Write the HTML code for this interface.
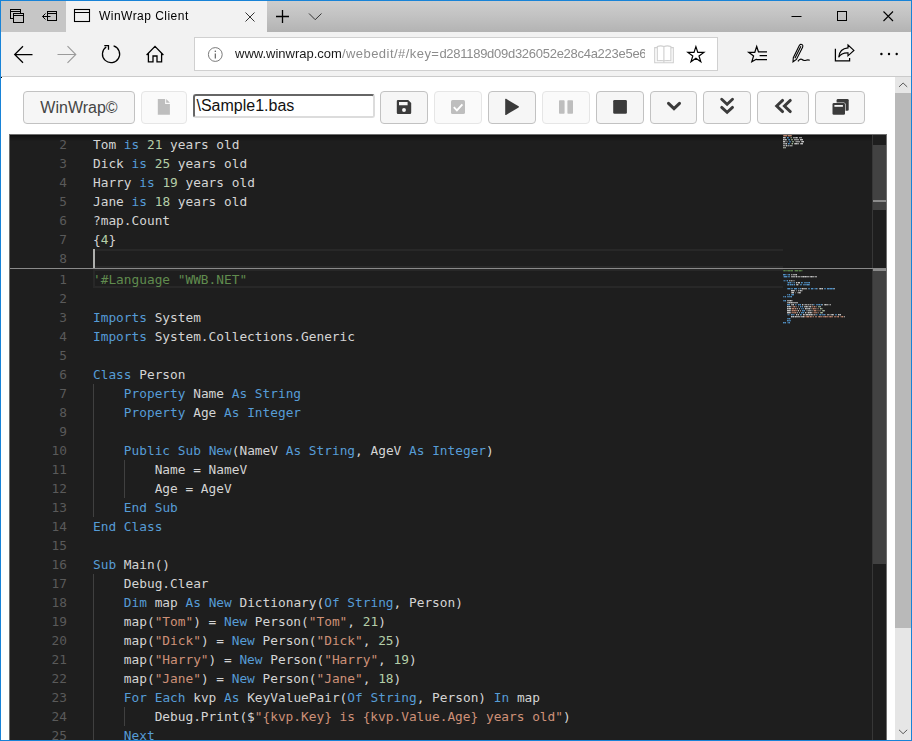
<!DOCTYPE html>
<html lang="en">
<head>
<meta charset="utf-8">
<title>WinWrap Client</title>
<style>
*{box-sizing:border-box;margin:0;padding:0}
html,body{width:912px;height:741px;overflow:hidden;background:#fff}
body{font-family:"Liberation Sans",sans-serif;position:relative}
.abs{position:absolute}
#frame{position:absolute;left:0;top:0;width:912px;height:741px;border:1px solid #1883d7;z-index:50;pointer-events:none}
/* ---------- browser chrome ---------- */
#tabbar{position:absolute;left:1px;top:1px;width:910px;height:31px;background:linear-gradient(#cdcdcd,#c3c3c3 45%,#b3b3b3)}
#tabprev{position:absolute;left:0;top:0;width:65px;height:31px;background:#c6c6c6}
#tab{position:absolute;left:65px;top:0;width:201px;height:31px;background:#f2f2f2}
#tabtitle{position:absolute;left:98px;top:8px;font-size:12px;letter-spacing:.47px;color:#000;white-space:nowrap;will-change:transform}
#navbar{position:absolute;left:1px;top:32px;width:910px;height:44px;background:#f2f2f2}
#navline{position:absolute;left:1px;top:76px;width:910px;height:1px;background:#cbcbcb}
#addr{position:absolute;left:193px;top:5px;width:524px;height:34px;background:#fff;border:1px solid #d0d0d0}
#url{position:absolute;left:39.5px;top:8px;font-size:13px;white-space:nowrap;color:#8c8c8c;width:410px;overflow:hidden;will-change:transform}
#url b{font-weight:normal;color:#1a1a1a}
#u1{letter-spacing:.45px}#u2,#u3{letter-spacing:-.276px}
svg{position:absolute;overflow:visible}
/* ---------- page ---------- */
#page{position:absolute;left:1px;top:77px;width:894px;height:663px;background:#fff;overflow:hidden}
.btn{position:absolute;top:14px;height:33px;border:1px solid #c2c2c2;border-radius:4px;background:#f6f6f6}
.btn.dis{border-color:#e6e6e6;background:#fafafa}
#brand{font-size:16px;color:#454545;text-align:center;line-height:31px}
#fname{position:absolute;left:192px;top:17px;width:182px;height:24px;border:2px solid;border-color:#666 #dcdcdc #dcdcdc #666;border-radius:3px;background:#fff;font-size:16px;line-height:19px;color:#111;padding-left:1.5px;white-space:nowrap}
/* ---------- scrollbar ---------- */
#vsb{position:absolute;left:895px;top:77px;width:16px;height:663px;background:#e6e6e6}
#vthumb{position:absolute;left:0;top:16px;width:16px;height:535px;background:#b9b9b9}
/* ---------- editor ---------- */
#ed{position:absolute;left:8px;top:57px;width:878px;height:620px;background:#1e1e1e;border:1px solid #6f6f6f;border-bottom:0;overflow:hidden;
 font-family:"DejaVu Sans Mono","Liberation Mono",monospace;font-size:12.8px;color:#d4d4d4}
.ln{position:absolute;left:0;height:19px;line-height:19px;white-space:pre}
.ln i{position:absolute;left:0;width:57px;text-align:right;color:#5a5a5a;font-style:normal}
.ln span.c{position:absolute;left:83px}
.cl{position:absolute;left:83px;width:690px;height:19px;border:2px solid #282828;border-right:0}
.ig{position:absolute;width:1px;background:#404040}
.k{color:#569cd6}.n{color:#b5cea8}.s{color:#ce9178}.g{color:#608b4e}
</style>
</head>
<body>
<div id="tabbar">
  <div id="tabprev"></div>
  <div id="tab"></div>
  <div id="tabtitle">WinWrap Client</div>
</div>
<div id="navbar">
  <div id="addr"><div id="url"><b>www.winwrap.com</b><span id="u1">/webedit/#/key=</span><span id="u2">d281189d09d326052e28c4a223e5e</span><span id="u3">66</span></div></div>
</div>
<div id="navline"></div>
<svg id="chromeicons" width="912" height="77" viewBox="0 0 912 77" style="left:0;top:0;z-index:5" fill="none" stroke="#000" stroke-width="1">
  <!-- tab preview icons -->
  <g>
    <rect x="10.5" y="9.5" width="10" height="9"/><line x1="10.5" y1="11.5" x2="20.5" y2="11.5"/>
    <rect x="13.5" y="13.5" width="10" height="9" fill="#c6c6c6"/><line x1="13.5" y1="15.5" x2="23.5" y2="15.5"/>
    <rect x="47.5" y="11.5" width="9" height="9"/><line x1="47.5" y1="13.5" x2="56.5" y2="13.5"/>
    <path d="M50.5 16.5H42.5M45.5 13.5L42.5 16.5L45.5 19.5"/>
  </g>
  <!-- active tab icon, close, plus, chevron -->
  <rect x="74.5" y="9.5" width="15" height="12" stroke-width="1.1"/><line x1="74.5" y1="12.5" x2="89.5" y2="12.5"/>
  <path d="M245.5 12.5L254.5 21.5M254.5 12.5L245.5 21.5" stroke="#333"/>
  <path d="M276 16.5H289M282.5 10V23" stroke-width="1.3"/>
  <path d="M309 13.5L315.2 19.7L321.5 13.5" stroke="#333"/>
  <!-- window controls -->
  <path d="M791.5 16.5H801.5"/>
  <rect x="837.5" y="11.5" width="9" height="9"/>
  <path d="M883.5 11.5L893 21M893 11.5L883.5 21" stroke-width="1.1"/>
  <!-- nav -->
  <path d="M32.5 54.5H14.8M23 46.2L14.7 54.5L23 62.8" stroke-width="1.25"/>
  <path d="M57.5 54.5H75.8M67.5 46.2L75.8 54.5L67.5 62.8" stroke="#9b9b9b" stroke-width="1.1"/>
  <path d="M113.6 45.9A8.6 8.6 0 1 1 106.2 47.0M104.3 45.5H108.5V49.7" stroke-width="1.25"/>
  <path d="M146.6 55.0L155 46.4L163.4 55.0M148.4 53.6V61.9H153V56H157V61.9H161.6V53.6" stroke-width="1.3"/>
  <!-- info -->
  <circle cx="215.3" cy="54.5" r="6.9" stroke="#6b6b6b" stroke-width="0.9"/>
  <path d="M215.3 53.4V58.4" stroke="#555" stroke-width="1.1"/><circle cx="215.3" cy="51.2" r="0.75" fill="#555" stroke="none"/>
  <!-- reading view (disabled) -->
  <g stroke="#cfcfcf" stroke-width="1.1">
    <path d="M657.3 47.6H654.7V62.7H673.3V47.6H670.9"/>
    <path d="M657.3 60.8V46.6Q660.8 45.2 663.9 46.6V60.8Q660.8 60.4 657.3 60.8ZM663.9 46.6Q667.2 45.2 670.9 46.6V60.8Q667.2 60.4 663.9 60.8M663.9 60.8V62.7"/>
  </g>
  <!-- favourite star -->
  <polygon points="695.9,46.6 697.8,52.4 703.9,52.4 699.0,56.0 700.8,61.8 695.9,58.2 691.0,61.8 692.8,56.0 687.9,52.4 694.0,52.4" stroke-width="1.2"/>
  <!-- hub -->
  <path d="M758.6 52.3L756.7 46.5L754.8 52.3L748.7 52.3L753.6 55.9L751.8 61.7L756.7 59.0M758.3 51.8H767M759.6 55.7H767M756.4 59.6H767" stroke-width="1.2"/>
  <!-- pen -->
  <path d="M793 61.8L793.3 57.7L799.3 45.5Q800.6 43.6 802.2 44.7Q803.4 45.7 802.6 47.3L796.4 59.4ZM794.9 58.3L800.9 46.2M797.9 61.4Q799.8 58.4 801.6 59.3Q803.8 61 806 60.2Q808 59.5 809.8 60.2" stroke-width="1.1"/>
  <!-- share -->
  <path d="M835.4 48.8V60.9H849.6V58" stroke-width="1.25"/>
  <path d="M848 45L853.9 50.4L848 55.8V52.9Q841.5 52.6 838.7 57.2Q839.6 48.6 848 47.9Z" stroke-width="1.15"/>
  <!-- more -->
  <g fill="#000" stroke="none"><circle cx="881.4" cy="54" r="1.2"/><circle cx="889" cy="54" r="1.2"/><circle cx="896.7" cy="54" r="1.2"/></g>
</svg>


<div id="page">
  <div class="btn" id="brand" style="left:22px;width:112px">WinWrap©</div>
  <div class="btn dis" style="left:140px;width:46px"></div>
  <div id="fname">\Sample1.bas</div>
  <div class="btn" style="left:379px;width:48px"></div>
  <div class="btn dis" style="left:433px;width:48px"></div>
  <div class="btn" style="left:487px;width:48px"></div>
  <div class="btn dis" style="left:541px;width:48px"></div>
  <div class="btn" style="left:595px;width:48px"></div>
  <div class="btn" style="left:649px;width:47px"></div>
  <div class="btn" style="left:702px;width:48px"></div>
  <div class="btn" style="left:756px;width:52px"></div>
  <div class="btn" style="left:814px;width:50px"></div>

  <div id="ed">
<!--DECO-->
<div class="abs" style="left:0;top:0;width:862px;height:6px;box-shadow:#000 0 6px 6px -6px inset"></div>
<div class="cl" style="top:114px"></div>
<div class="cl" style="top:134px"></div>
<div class="abs" style="left:83px;top:114px;width:2px;height:19px;background:#aeafad"></div>
<div class="abs" style="left:0;top:133px;width:876px;height:1px;background:#8a8a8a;z-index:3"></div>
<div class="ig" style="left:83px;top:249px;height:133px"></div>
<div class="ig" style="left:114px;top:325px;height:38px"></div>
<div class="ig" style="left:83px;top:439px;height:190px"></div>
<div class="ig" style="left:114px;top:572px;height:19px"></div>
<div class="abs" style="left:862px;top:0;width:1px;height:620px;background:#373737"></div>
<div class="abs" style="left:863px;top:10px;width:13px;height:65px;background:#424242"></div>
<div class="abs" style="left:863px;top:65px;width:13px;height:2px;background:#8c8c8c"></div>
<div class="abs" style="left:863px;top:134px;width:13px;height:295px;background:#424242"></div>
<div class="abs" style="left:863px;top:134px;width:13px;height:2px;background:#8c8c8c"></div>
<svg width="90" height="200" viewBox="773 0 90 200" style="left:773px;top:0" fill="none" stroke-width="1" shape-rendering="crispEdges">
<path stroke="#608b4e" opacity="0.35" d="M784 135.5h1M788 135.5h1M792 135.5h1"/>
<path stroke="#608b4e" opacity="0.12" d="M784 136.5h1M788 136.5h1M792 136.5h1"/>
<path stroke="#608b4e" opacity="0.65" d="M773 135.5h1M775 135.5h1M776 135.5h1M777 135.5h1M780 135.5h1M791 135.5h1"/>
<path stroke="#608b4e" opacity="0.24" d="M773 136.5h1M775 136.5h1M776 136.5h1M777 136.5h1M780 136.5h1M791 136.5h1"/>
<path stroke="#608b4e" opacity="0.90" d="M774 135.5h1M778 135.5h1M779 135.5h1M781 135.5h1M782 135.5h1M785 135.5h1M786 135.5h1M787 135.5h1M789 135.5h1M790 135.5h1"/>
<path stroke="#608b4e" opacity="0.36" d="M774 136.5h1M778 136.5h1M779 136.5h1M781 136.5h1M782 136.5h1M785 136.5h1M786 136.5h1M787 136.5h1M789 136.5h1M790 136.5h1"/>
<path stroke="#569cd6" opacity="0.35" d="M776 139.5h1M777 139.5h1M773 141.5h1M777 141.5h1M773 145.5h1M775 145.5h1M776 145.5h1M777 147.5h1M781 147.5h1M782 147.5h1M783 147.5h1M779 149.5h1M783 149.5h1M780 153.5h1M789 153.5h1M803 153.5h1M804 153.5h1M778 159.5h1M774 161.5h1M786 169.5h1M804 169.5h1M810 169.5h1M791 171.5h1M792 173.5h1M777 179.5h1M779 179.5h1M784 179.5h1M807 179.5h1M811 179.5h1M780 183.5h1M777 187.5h1"/>
<path stroke="#569cd6" opacity="0.12" d="M776 140.5h1M777 140.5h1M773 142.5h1M777 142.5h1M773 146.5h1M775 146.5h1M776 146.5h1M777 148.5h1M781 148.5h1M782 148.5h1M783 148.5h1M779 150.5h1M783 150.5h1M780 154.5h1M789 154.5h1M803 154.5h1M804 154.5h1M778 160.5h1M774 162.5h1M786 170.5h1M804 170.5h1M810 170.5h1M791 172.5h1M792 174.5h1M777 180.5h1M779 180.5h1M784 180.5h1M807 180.5h1M811 180.5h1M780 184.5h1M777 188.5h1"/>
<path stroke="#569cd6" opacity="0.65" d="M778 2.5h1M778 4.5h1M779 6.5h1M780 6.5h1M779 8.5h1M775 139.5h1M778 139.5h1M778 141.5h1M779 141.5h1M774 145.5h1M779 147.5h1M784 147.5h1M792 147.5h1M794 147.5h1M795 147.5h1M796 147.5h1M797 147.5h1M798 147.5h1M777 149.5h1M781 149.5h1M790 149.5h1M791 149.5h1M793 149.5h1M794 149.5h1M795 149.5h1M796 149.5h1M799 149.5h1M777 153.5h1M781 153.5h1M782 153.5h1M788 153.5h1M798 153.5h1M799 153.5h1M805 153.5h1M814 153.5h1M815 153.5h1M819 153.5h1M822 153.5h1M777 159.5h1M781 159.5h1M773 161.5h1M777 161.5h1M778 161.5h1M779 161.5h1M780 161.5h1M773 165.5h1M774 165.5h1M785 169.5h1M789 169.5h1M803 169.5h1M806 169.5h1M807 169.5h1M808 169.5h1M791 173.5h1M793 173.5h1M793 175.5h1M792 177.5h1M778 179.5h1M782 179.5h1M783 179.5h1M791 179.5h1M806 179.5h1M809 179.5h1M812 179.5h1M813 179.5h1M825 179.5h1M826 179.5h1M777 183.5h1M778 183.5h1M778 185.5h1M779 185.5h1M780 185.5h1M774 187.5h1M778 187.5h1"/>
<path stroke="#569cd6" opacity="0.24" d="M778 3.5h1M778 5.5h1M779 7.5h1M780 7.5h1M779 9.5h1M775 140.5h1M778 140.5h1M778 142.5h1M779 142.5h1M774 146.5h1M779 148.5h1M784 148.5h1M792 148.5h1M794 148.5h1M795 148.5h1M796 148.5h1M797 148.5h1M798 148.5h1M777 150.5h1M781 150.5h1M790 150.5h1M791 150.5h1M793 150.5h1M794 150.5h1M795 150.5h1M796 150.5h1M799 150.5h1M777 154.5h1M781 154.5h1M782 154.5h1M788 154.5h1M798 154.5h1M799 154.5h1M805 154.5h1M814 154.5h1M815 154.5h1M819 154.5h1M822 154.5h1M777 160.5h1M781 160.5h1M773 162.5h1M777 162.5h1M778 162.5h1M779 162.5h1M780 162.5h1M773 166.5h1M774 166.5h1M785 170.5h1M789 170.5h1M803 170.5h1M806 170.5h1M807 170.5h1M808 170.5h1M791 174.5h1M793 174.5h1M793 176.5h1M792 178.5h1M778 180.5h1M782 180.5h1M783 180.5h1M791 180.5h1M806 180.5h1M809 180.5h1M812 180.5h1M813 180.5h1M825 180.5h1M826 180.5h1M777 184.5h1M778 184.5h1M778 186.5h1M779 186.5h1M780 186.5h1M774 188.5h1M778 188.5h1"/>
<path stroke="#569cd6" opacity="0.90" d="M777 2.5h1M779 4.5h1M778 8.5h1M773 139.5h1M774 139.5h1M779 139.5h1M774 141.5h1M775 141.5h1M776 141.5h1M777 145.5h1M778 147.5h1M780 147.5h1M791 147.5h1M799 147.5h1M778 149.5h1M780 149.5h1M782 149.5h1M784 149.5h1M797 149.5h1M798 149.5h1M778 153.5h1M779 153.5h1M784 153.5h1M785 153.5h1M786 153.5h1M790 153.5h1M801 153.5h1M802 153.5h1M806 153.5h1M817 153.5h1M818 153.5h1M820 153.5h1M821 153.5h1M823 153.5h1M779 159.5h1M782 159.5h1M783 159.5h1M775 161.5h1M781 161.5h1M775 165.5h1M777 169.5h1M778 169.5h1M779 169.5h1M788 169.5h1M790 169.5h1M809 169.5h1M811 169.5h1M790 171.5h1M792 171.5h1M792 175.5h1M794 175.5h1M791 177.5h1M793 177.5h1M781 179.5h1M790 179.5h1M810 179.5h1M814 179.5h1M779 183.5h1M777 185.5h1M773 187.5h1M775 187.5h1M779 187.5h1"/>
<path stroke="#569cd6" opacity="0.36" d="M777 3.5h1M779 5.5h1M778 9.5h1M773 140.5h1M774 140.5h1M779 140.5h1M774 142.5h1M775 142.5h1M776 142.5h1M777 146.5h1M778 148.5h1M780 148.5h1M791 148.5h1M799 148.5h1M778 150.5h1M780 150.5h1M782 150.5h1M784 150.5h1M797 150.5h1M798 150.5h1M778 154.5h1M779 154.5h1M784 154.5h1M785 154.5h1M786 154.5h1M790 154.5h1M801 154.5h1M802 154.5h1M806 154.5h1M817 154.5h1M818 154.5h1M820 154.5h1M821 154.5h1M823 154.5h1M779 160.5h1M782 160.5h1M783 160.5h1M775 162.5h1M781 162.5h1M775 166.5h1M777 170.5h1M778 170.5h1M779 170.5h1M788 170.5h1M790 170.5h1M809 170.5h1M811 170.5h1M790 172.5h1M792 172.5h1M792 176.5h1M794 176.5h1M791 178.5h1M793 178.5h1M781 180.5h1M790 180.5h1M810 180.5h1M814 180.5h1M779 184.5h1M777 186.5h1M773 188.5h1M775 188.5h1M779 188.5h1"/>
<path stroke="#b5cea8" opacity="0.35" d="M780 2.5h1M781 8.5h1"/>
<path stroke="#b5cea8" opacity="0.12" d="M780 3.5h1M781 9.5h1"/>
<path stroke="#b5cea8" opacity="0.65" d="M781 2.5h1M781 4.5h1M782 4.5h1M782 6.5h1M783 6.5h1M774 12.5h1M808 171.5h1M809 171.5h1M811 173.5h1M812 175.5h1M810 177.5h1"/>
<path stroke="#b5cea8" opacity="0.24" d="M781 3.5h1M781 5.5h1M782 5.5h1M782 7.5h1M783 7.5h1M774 13.5h1M808 172.5h1M809 172.5h1M811 174.5h1M812 176.5h1M810 178.5h1"/>
<path stroke="#b5cea8" opacity="0.90" d="M782 8.5h1M810 173.5h1M813 175.5h1M811 177.5h1"/>
<path stroke="#b5cea8" opacity="0.36" d="M782 9.5h1M810 174.5h1M813 176.5h1M811 178.5h1"/>
<path stroke="#ce9178" opacity="0.35" d="M777 0.5h1M781 171.5h1M782 171.5h1M785 171.5h1M801 171.5h1M803 171.5h1M805 171.5h1M781 173.5h1M784 173.5h1M786 173.5h1M802 173.5h1M806 173.5h1M807 173.5h1M781 175.5h1M787 175.5h1M803 175.5h1M806 175.5h1M807 175.5h1M808 175.5h1M809 175.5h1M781 177.5h1M786 177.5h1M802 177.5h1M803 177.5h1M807 177.5h1M795 181.5h1M799 181.5h1M802 181.5h1M812 181.5h1M818 181.5h1M826 181.5h1M830 181.5h1M833 181.5h1"/>
<path stroke="#ce9178" opacity="0.12" d="M777 1.5h1M781 172.5h1M782 172.5h1M785 172.5h1M801 172.5h1M803 172.5h1M805 172.5h1M781 174.5h1M784 174.5h1M786 174.5h1M802 174.5h1M806 174.5h1M807 174.5h1M781 176.5h1M787 176.5h1M803 176.5h1M806 176.5h1M807 176.5h1M808 176.5h1M809 176.5h1M781 178.5h1M786 178.5h1M802 178.5h1M803 178.5h1M807 178.5h1M795 182.5h1M799 182.5h1M802 182.5h1M812 182.5h1M818 182.5h1M826 182.5h1M830 182.5h1M833 182.5h1"/>
<path stroke="#ce9178" opacity="0.65" d="M773 0.5h1M781 0.5h1M783 171.5h1M802 171.5h1M804 173.5h1M805 173.5h1M783 175.5h1M785 175.5h1M786 175.5h1M782 177.5h1M783 177.5h1M784 177.5h1M804 177.5h1M805 177.5h1M806 177.5h1M794 181.5h1M796 181.5h1M801 181.5h1M803 181.5h1M805 181.5h1M806 181.5h1M808 181.5h1M810 181.5h1M811 181.5h1M813 181.5h1M814 181.5h1M816 181.5h1M817 181.5h1M819 181.5h1M821 181.5h1M822 181.5h1M824 181.5h1M825 181.5h1M827 181.5h1M831 181.5h1"/>
<path stroke="#ce9178" opacity="0.24" d="M773 1.5h1M781 1.5h1M783 172.5h1M802 172.5h1M804 174.5h1M805 174.5h1M783 176.5h1M785 176.5h1M786 176.5h1M782 178.5h1M783 178.5h1M784 178.5h1M804 178.5h1M805 178.5h1M806 178.5h1M794 182.5h1M796 182.5h1M801 182.5h1M803 182.5h1M805 182.5h1M806 182.5h1M808 182.5h1M810 182.5h1M811 182.5h1M813 182.5h1M814 182.5h1M816 182.5h1M817 182.5h1M819 182.5h1M821 182.5h1M822 182.5h1M824 182.5h1M825 182.5h1M827 182.5h1M831 182.5h1"/>
<path stroke="#ce9178" opacity="0.90" d="M774 0.5h1M775 0.5h1M776 0.5h1M778 0.5h1M779 0.5h1M780 0.5h1M784 171.5h1M804 171.5h1M782 173.5h1M783 173.5h1M785 173.5h1M803 173.5h1M782 175.5h1M784 175.5h1M804 175.5h1M805 175.5h1M785 177.5h1M797 181.5h1M798 181.5h1M800 181.5h1M809 181.5h1M815 181.5h1M820 181.5h1M828 181.5h1M832 181.5h1"/>
<path stroke="#ce9178" opacity="0.36" d="M774 1.5h1M775 1.5h1M776 1.5h1M778 1.5h1M779 1.5h1M780 1.5h1M784 172.5h1M804 172.5h1M782 174.5h1M783 174.5h1M785 174.5h1M803 174.5h1M782 176.5h1M784 176.5h1M804 176.5h1M805 176.5h1M785 178.5h1M797 182.5h1M798 182.5h1M800 182.5h1M809 182.5h1M815 182.5h1M820 182.5h1M828 182.5h1M832 182.5h1"/>
<path stroke="#d4d4d4" opacity="0.35" d="M775 6.5h1M776 6.5h1M777 6.5h1M785 6.5h1M775 10.5h1M777 10.5h1M779 10.5h1M782 10.5h1M782 139.5h1M785 141.5h1M787 141.5h1M790 141.5h1M799 141.5h1M804 141.5h1M780 145.5h1M782 145.5h1M783 145.5h1M784 145.5h1M787 147.5h1M788 149.5h1M791 153.5h1M807 153.5h1M786 155.5h1M789 155.5h1M792 155.5h1M785 157.5h1M787 157.5h1M782 165.5h1M793 169.5h1M794 169.5h1M797 169.5h1M799 169.5h1M801 169.5h1M818 169.5h1M819 169.5h1M786 171.5h1M788 171.5h1M798 171.5h1M806 171.5h1M800 173.5h1M801 173.5h1M808 173.5h1M812 173.5h1M796 175.5h1M797 175.5h1M801 175.5h1M802 175.5h1M810 175.5h1M796 177.5h1M797 177.5h1M808 177.5h1M787 179.5h1M795 179.5h1M803 179.5h1M805 179.5h1M815 179.5h1M819 179.5h1M820 179.5h1M784 181.5h1M790 181.5h1"/>
<path stroke="#d4d4d4" opacity="0.12" d="M775 7.5h1M776 7.5h1M777 7.5h1M785 7.5h1M775 11.5h1M777 11.5h1M779 11.5h1M782 11.5h1M782 140.5h1M785 142.5h1M787 142.5h1M790 142.5h1M799 142.5h1M804 142.5h1M780 146.5h1M782 146.5h1M783 146.5h1M784 146.5h1M787 148.5h1M788 150.5h1M791 154.5h1M807 154.5h1M786 156.5h1M789 156.5h1M792 156.5h1M785 158.5h1M787 158.5h1M782 166.5h1M793 170.5h1M794 170.5h1M797 170.5h1M799 170.5h1M801 170.5h1M818 170.5h1M819 170.5h1M786 172.5h1M788 172.5h1M798 172.5h1M806 172.5h1M800 174.5h1M801 174.5h1M808 174.5h1M812 174.5h1M796 176.5h1M797 176.5h1M801 176.5h1M802 176.5h1M810 176.5h1M796 178.5h1M797 178.5h1M808 178.5h1M787 180.5h1M795 180.5h1M803 180.5h1M805 180.5h1M815 180.5h1M819 180.5h1M820 180.5h1M784 182.5h1M790 182.5h1"/>
<path stroke="#d4d4d4" opacity="0.65" d="M775 2.5h1M783 2.5h1M784 2.5h1M785 2.5h1M787 2.5h1M789 2.5h1M790 2.5h1M791 2.5h1M774 4.5h1M776 4.5h1M784 4.5h1M785 4.5h1M786 4.5h1M787 4.5h1M788 4.5h1M786 6.5h1M787 6.5h1M788 6.5h1M789 6.5h1M791 6.5h1M773 8.5h1M774 8.5h1M775 8.5h1M784 8.5h1M787 8.5h1M788 8.5h1M790 8.5h1M773 10.5h1M774 10.5h1M778 10.5h1M780 10.5h1M781 10.5h1M773 12.5h1M775 12.5h1M781 139.5h1M783 139.5h1M784 139.5h1M785 139.5h1M781 141.5h1M782 141.5h1M783 141.5h1M784 141.5h1M788 141.5h1M789 141.5h1M791 141.5h1M792 141.5h1M794 141.5h1M796 141.5h1M797 141.5h1M798 141.5h1M800 141.5h1M802 141.5h1M803 141.5h1M805 141.5h1M806 141.5h1M779 145.5h1M781 145.5h1M786 149.5h1M793 153.5h1M794 153.5h1M795 153.5h1M796 153.5h1M809 153.5h1M811 153.5h1M824 153.5h1M784 155.5h1M788 155.5h1M791 155.5h1M781 157.5h1M788 157.5h1M790 157.5h1M777 165.5h1M778 165.5h1M779 165.5h1M781 165.5h1M777 167.5h1M778 167.5h1M780 167.5h1M782 167.5h1M783 167.5h1M784 167.5h1M785 167.5h1M786 167.5h1M787 167.5h1M781 169.5h1M782 169.5h1M795 169.5h1M796 169.5h1M798 169.5h1M800 169.5h1M802 169.5h1M812 169.5h1M814 169.5h1M816 169.5h1M817 169.5h1M820 169.5h1M778 171.5h1M780 171.5h1M794 171.5h1M795 171.5h1M797 171.5h1M799 171.5h1M810 171.5h1M778 173.5h1M787 173.5h1M789 173.5h1M796 173.5h1M797 173.5h1M798 173.5h1M780 175.5h1M790 175.5h1M798 175.5h1M799 175.5h1M800 175.5h1M814 175.5h1M780 177.5h1M787 177.5h1M789 177.5h1M799 177.5h1M801 177.5h1M812 177.5h1M794 179.5h1M798 179.5h1M800 179.5h1M802 179.5h1M804 179.5h1M817 179.5h1M818 179.5h1M821 179.5h1M823 179.5h1M829 179.5h1M782 181.5h1M786 181.5h1M787 181.5h1M788 181.5h1M789 181.5h1M791 181.5h1M792 181.5h1M834 181.5h1"/>
<path stroke="#d4d4d4" opacity="0.24" d="M775 3.5h1M783 3.5h1M784 3.5h1M785 3.5h1M787 3.5h1M789 3.5h1M790 3.5h1M791 3.5h1M774 5.5h1M776 5.5h1M784 5.5h1M785 5.5h1M786 5.5h1M787 5.5h1M788 5.5h1M786 7.5h1M787 7.5h1M788 7.5h1M789 7.5h1M791 7.5h1M773 9.5h1M774 9.5h1M775 9.5h1M784 9.5h1M787 9.5h1M788 9.5h1M790 9.5h1M773 11.5h1M774 11.5h1M778 11.5h1M780 11.5h1M781 11.5h1M773 13.5h1M775 13.5h1M781 140.5h1M783 140.5h1M784 140.5h1M785 140.5h1M781 142.5h1M782 142.5h1M783 142.5h1M784 142.5h1M788 142.5h1M789 142.5h1M791 142.5h1M792 142.5h1M794 142.5h1M796 142.5h1M797 142.5h1M798 142.5h1M800 142.5h1M802 142.5h1M803 142.5h1M805 142.5h1M806 142.5h1M779 146.5h1M781 146.5h1M786 150.5h1M793 154.5h1M794 154.5h1M795 154.5h1M796 154.5h1M809 154.5h1M811 154.5h1M824 154.5h1M784 156.5h1M788 156.5h1M791 156.5h1M781 158.5h1M788 158.5h1M790 158.5h1M777 166.5h1M778 166.5h1M779 166.5h1M781 166.5h1M777 168.5h1M778 168.5h1M780 168.5h1M782 168.5h1M783 168.5h1M784 168.5h1M785 168.5h1M786 168.5h1M787 168.5h1M781 170.5h1M782 170.5h1M795 170.5h1M796 170.5h1M798 170.5h1M800 170.5h1M802 170.5h1M812 170.5h1M814 170.5h1M816 170.5h1M817 170.5h1M820 170.5h1M778 172.5h1M780 172.5h1M794 172.5h1M795 172.5h1M797 172.5h1M799 172.5h1M810 172.5h1M778 174.5h1M787 174.5h1M789 174.5h1M796 174.5h1M797 174.5h1M798 174.5h1M780 176.5h1M790 176.5h1M798 176.5h1M799 176.5h1M800 176.5h1M814 176.5h1M780 178.5h1M787 178.5h1M789 178.5h1M799 178.5h1M801 178.5h1M812 178.5h1M794 180.5h1M798 180.5h1M800 180.5h1M802 180.5h1M804 180.5h1M817 180.5h1M818 180.5h1M821 180.5h1M823 180.5h1M829 180.5h1M782 182.5h1M786 182.5h1M787 182.5h1M788 182.5h1M789 182.5h1M791 182.5h1M792 182.5h1M834 182.5h1"/>
<path stroke="#d4d4d4" opacity="0.90" d="M773 2.5h1M774 2.5h1M786 2.5h1M773 4.5h1M775 4.5h1M790 4.5h1M791 4.5h1M792 4.5h1M773 6.5h1M774 6.5h1M792 6.5h1M793 6.5h1M776 8.5h1M785 8.5h1M786 8.5h1M791 8.5h1M792 8.5h1M776 10.5h1M786 139.5h1M786 141.5h1M793 141.5h1M795 141.5h1M801 141.5h1M786 147.5h1M788 147.5h1M789 147.5h1M787 149.5h1M792 153.5h1M810 153.5h1M812 153.5h1M781 155.5h1M782 155.5h1M783 155.5h1M790 155.5h1M782 157.5h1M783 157.5h1M789 157.5h1M780 165.5h1M779 167.5h1M781 167.5h1M783 169.5h1M792 169.5h1M815 169.5h1M777 171.5h1M779 171.5h1M796 171.5h1M800 171.5h1M777 173.5h1M779 173.5h1M780 173.5h1M795 173.5h1M799 173.5h1M777 175.5h1M778 175.5h1M779 175.5h1M788 175.5h1M777 177.5h1M778 177.5h1M779 177.5h1M795 177.5h1M798 177.5h1M800 177.5h1M786 179.5h1M788 179.5h1M793 179.5h1M796 179.5h1M797 179.5h1M799 179.5h1M801 179.5h1M822 179.5h1M828 179.5h1M830 179.5h1M781 181.5h1M783 181.5h1M785 181.5h1M793 181.5h1"/>
<path stroke="#d4d4d4" opacity="0.36" d="M773 3.5h1M774 3.5h1M786 3.5h1M773 5.5h1M775 5.5h1M790 5.5h1M791 5.5h1M792 5.5h1M773 7.5h1M774 7.5h1M792 7.5h1M793 7.5h1M776 9.5h1M785 9.5h1M786 9.5h1M791 9.5h1M792 9.5h1M776 11.5h1M786 140.5h1M786 142.5h1M793 142.5h1M795 142.5h1M801 142.5h1M786 148.5h1M788 148.5h1M789 148.5h1M787 150.5h1M792 154.5h1M810 154.5h1M812 154.5h1M781 156.5h1M782 156.5h1M783 156.5h1M790 156.5h1M782 158.5h1M783 158.5h1M789 158.5h1M780 166.5h1M779 168.5h1M781 168.5h1M783 170.5h1M792 170.5h1M815 170.5h1M777 172.5h1M779 172.5h1M796 172.5h1M800 172.5h1M777 174.5h1M779 174.5h1M780 174.5h1M795 174.5h1M799 174.5h1M777 176.5h1M778 176.5h1M779 176.5h1M788 176.5h1M777 178.5h1M778 178.5h1M779 178.5h1M795 178.5h1M798 178.5h1M800 178.5h1M786 180.5h1M788 180.5h1M793 180.5h1M796 180.5h1M797 180.5h1M799 180.5h1M801 180.5h1M822 180.5h1M828 180.5h1M830 180.5h1M781 182.5h1M783 182.5h1M785 182.5h1M793 182.5h1"/>
</svg>
<!--/DECO-->
<!--LINES-->
<div class="ln" style="top:0px"><i>2</i><span class="c">Tom <span class="k">is</span> <span class="n">21</span> years old</span></div>
<div class="ln" style="top:19px"><i>3</i><span class="c">Dick <span class="k">is</span> <span class="n">25</span> years old</span></div>
<div class="ln" style="top:38px"><i>4</i><span class="c">Harry <span class="k">is</span> <span class="n">19</span> years old</span></div>
<div class="ln" style="top:57px"><i>5</i><span class="c">Jane <span class="k">is</span> <span class="n">18</span> years old</span></div>
<div class="ln" style="top:76px"><i>6</i><span class="c">?map.Count</span></div>
<div class="ln" style="top:95px"><i>7</i><span class="c">{<span class="n">4</span>}</span></div>
<div class="ln" style="top:114px"><i>8</i><span class="c"></span></div>
<div class="ln" style="top:135px"><i>1</i><span class="c"><span class="g">'#Language "WWB.NET"</span></span></div>
<div class="ln" style="top:154px"><i>2</i><span class="c"></span></div>
<div class="ln" style="top:173px"><i>3</i><span class="c"><span class="k">Imports</span> System</span></div>
<div class="ln" style="top:192px"><i>4</i><span class="c"><span class="k">Imports</span> System.Collections.Generic</span></div>
<div class="ln" style="top:211px"><i>5</i><span class="c"></span></div>
<div class="ln" style="top:230px"><i>6</i><span class="c"><span class="k">Class</span> Person</span></div>
<div class="ln" style="top:249px"><i>7</i><span class="c">    <span class="k">Property</span> Name <span class="k">As</span> <span class="k">String</span></span></div>
<div class="ln" style="top:268px"><i>8</i><span class="c">    <span class="k">Property</span> Age <span class="k">As</span> <span class="k">Integer</span></span></div>
<div class="ln" style="top:287px"><i>9</i><span class="c"></span></div>
<div class="ln" style="top:306px"><i>10</i><span class="c">    <span class="k">Public</span> <span class="k">Sub</span> <span class="k">New</span>(NameV <span class="k">As</span> <span class="k">String</span>, AgeV <span class="k">As</span> <span class="k">Integer</span>)</span></div>
<div class="ln" style="top:325px"><i>11</i><span class="c">        Name = NameV</span></div>
<div class="ln" style="top:344px"><i>12</i><span class="c">        Age = AgeV</span></div>
<div class="ln" style="top:363px"><i>13</i><span class="c">    <span class="k">End</span> <span class="k">Sub</span></span></div>
<div class="ln" style="top:382px"><i>14</i><span class="c"><span class="k">End</span> <span class="k">Class</span></span></div>
<div class="ln" style="top:401px"><i>15</i><span class="c"></span></div>
<div class="ln" style="top:420px"><i>16</i><span class="c"><span class="k">Sub</span> Main()</span></div>
<div class="ln" style="top:439px"><i>17</i><span class="c">    Debug.Clear</span></div>
<div class="ln" style="top:458px"><i>18</i><span class="c">    <span class="k">Dim</span> map <span class="k">As</span> <span class="k">New</span> Dictionary(<span class="k">Of</span> <span class="k">String</span>, Person)</span></div>
<div class="ln" style="top:477px"><i>19</i><span class="c">    map(<span class="s">"Tom"</span>) = <span class="k">New</span> Person(<span class="s">"Tom"</span>, <span class="n">21</span>)</span></div>
<div class="ln" style="top:496px"><i>20</i><span class="c">    map(<span class="s">"Dick"</span>) = <span class="k">New</span> Person(<span class="s">"Dick"</span>, <span class="n">25</span>)</span></div>
<div class="ln" style="top:515px"><i>21</i><span class="c">    map(<span class="s">"Harry"</span>) = <span class="k">New</span> Person(<span class="s">"Harry"</span>, <span class="n">19</span>)</span></div>
<div class="ln" style="top:534px"><i>22</i><span class="c">    map(<span class="s">"Jane"</span>) = <span class="k">New</span> Person(<span class="s">"Jane"</span>, <span class="n">18</span>)</span></div>
<div class="ln" style="top:553px"><i>23</i><span class="c">    <span class="k">For</span> <span class="k">Each</span> kvp <span class="k">As</span> KeyValuePair(<span class="k">Of</span> <span class="k">String</span>, Person) <span class="k">In</span> map</span></div>
<div class="ln" style="top:572px"><i>24</i><span class="c">        Debug.Print($<span class="s">"{kvp.Key} is {kvp.Value.Age} years old"</span>)</span></div>
<div class="ln" style="top:591px"><i>25</i><span class="c">    <span class="k">Next</span></span></div>
<!--/LINES-->
  </div>
</div>

<svg id="pageicons" width="912" height="60" viewBox="0 77 912 60" style="left:0;top:77px;z-index:6" fill="#3b3b3b" stroke="none">
  <!-- file (disabled) -->
  <path d="M157.8 99H165.1V104H169.9V114.8H157.8Z M166.2 99L169.9 102.8H166.2Z" fill="#bebebe"/>
  <!-- save -->
  <path fill-rule="evenodd" d="M398 99.9H408.2L411.2 102.9V112.8Q411.2 114 410 114H398Q396.8 114 396.8 112.8V101.1Q396.8 99.9 398 99.9Z M399 101.9V105.3H407.6V101.9Z M404 108A1.95 1.95 0 1 0 404 111.9A1.95 1.95 0 1 0 404 108Z"/>
  <!-- check square (disabled) -->
  <rect x="451" y="100" width="14" height="14" rx="1.6" fill="#bebebe"/>
  <path d="M453.8 107.2L456.9 110.3L462.4 104.3" fill="none" stroke="#fff" stroke-width="1.9"/>
  <!-- play -->
  <path d="M505.2 99.3Q505.2 98.3 506.1 98.8L518.6 106.3Q519.4 106.85 518.6 107.4L506.1 114.9Q505.2 115.4 505.2 114.4Z"/>
  <!-- pause (disabled) -->
  <rect x="559" y="100.2" width="5.6" height="13.5" rx="0.8" fill="#bebebe"/>
  <rect x="567.4" y="100.2" width="5.6" height="13.5" rx="0.8" fill="#bebebe"/>
  <!-- stop -->
  <rect x="613.2" y="100" width="13.7" height="13.7" rx="1.3"/>
  <!-- chevron down -->
  <path d="M668.5 103.3L674 108.6L679.5 103.3" fill="none" stroke="#3b3b3b" stroke-width="3" stroke-linecap="round" stroke-linejoin="miter"/>
  <!-- angle double down -->
  <path d="M721.7 99.3L727.1 104.2L732.5 99.3M721.7 107.4L727.1 112.3L732.5 107.4" fill="none" stroke="#3b3b3b" stroke-width="2.9" stroke-linecap="round"/>
  <!-- angle double left -->
  <path d="M782.6 100.4L776.7 106L782.6 111.6M790.3 100.4L784.4 106L790.3 111.6" fill="none" stroke="#3b3b3b" stroke-width="2.9" stroke-linecap="round"/>
  <!-- window restore -->
  <rect x="836.6" y="98.9" width="12.1" height="11.8" rx="1.3"/>
  <rect x="831.9" y="102.5" width="13.7" height="12.8" rx="1.9" fill="#f6f6f6"/>
  <rect x="832.5" y="103.1" width="12.5" height="11.6" rx="1.3"/>
  <rect x="834.4" y="105" width="8.5" height="1.8" fill="#f6f6f6"/>
</svg>
<div id="vsb"><div id="vthumb"></div>
<svg width="16" height="663" viewBox="0 0 16 663" style="left:0;top:0" fill="none" stroke="#5a5a5a" stroke-width="1"><path d="M4 9.9L8.1 6L12.2 9.9M4 652.8L8.1 656.7L12.2 652.8"/></svg>
</div>
<div class="abs" style="left:1px;top:77px;width:1px;height:1px;background:#000;z-index:60"></div>
<div id="frame"></div>
</body>
</html>
